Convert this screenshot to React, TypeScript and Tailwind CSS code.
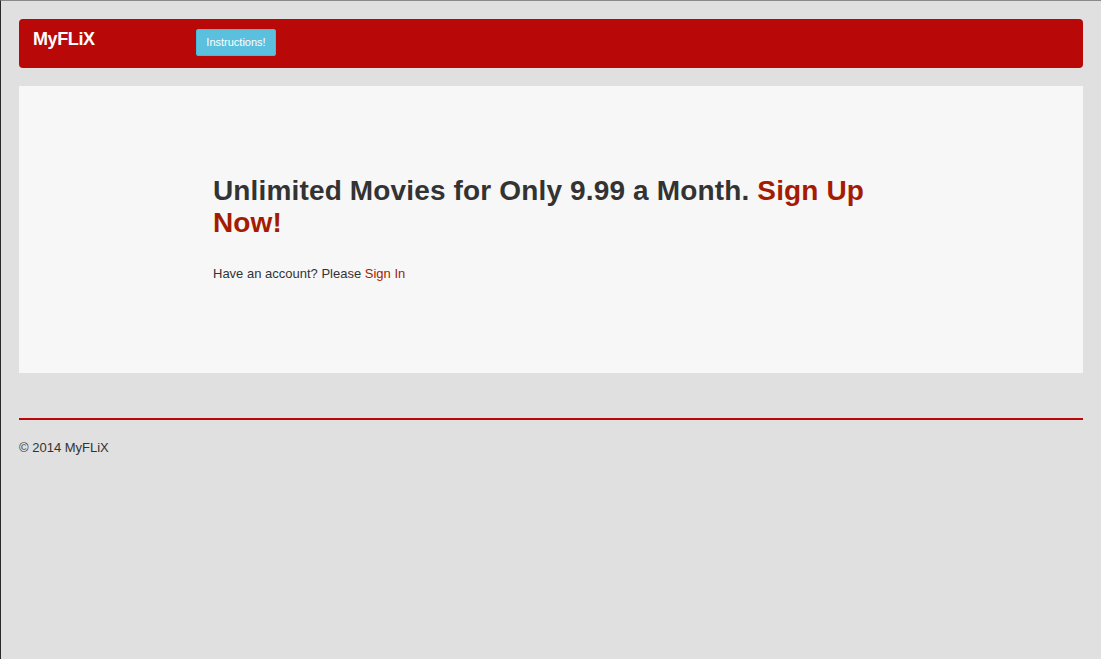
export default function App() {
 return (
  <div className="min-h-[659px] bg-[#e0e0e0] border-t border-t-[#8a8a8a] border-l border-l-[#2a2a2a] font-['Liberation_Sans',Arial,sans-serif] text-[13px] text-[#333]">
   <div className="px-[18px] pt-[18px]">
    <nav className="flex items-center h-[49px] bg-[#b90808] rounded-[4px] pl-[14px]">
     <a href="#" className="w-[163px] text-white text-[18px] font-bold tracking-[-0.4px] -mt-[8px]">
      MyFLiX
     </a>
     <button className="h-[27px] w-[80px] bg-[#5bc0de] border border-[#46b8da] rounded-[2px] text-white text-[11px] -mt-[2px]">
      Instructions!
     </button>
    </nav>
    <section className="mt-[18px] h-[287px] bg-[#f7f7f7] pl-[194px] pt-[89px]">
     <div className="w-[680px]">
      <h1 className="text-[28px] leading-[32px] font-bold tracking-[0.15px] text-[#333]">
       Unlimited Movies for Only 9.99 a Month.{" "}
       <a href="#" className="text-[#a51b00]">Sign Up</a>{" "}
       <a href="#" className="text-[#a51b00]">Now!</a>
      </h1>
      <p className="mt-[25px]">
       Have an account? Please <a href="#" className="text-[#a51b00]">Sign In</a>
      </p>
     </div>
    </section>
    <footer className="mt-[45px]">
     <hr className="border-0 h-[2px] bg-[#b90808]" />
     <p className="mt-[18px]">© 2014 MyFLiX</p>
    </footer>
   </div>
  </div>
 )
}
